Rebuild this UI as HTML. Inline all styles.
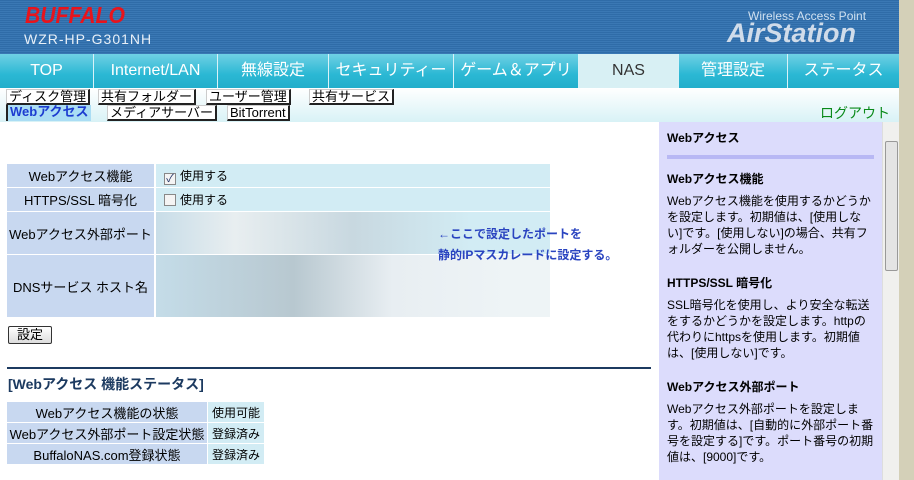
<!DOCTYPE html>
<html><head><meta charset="utf-8"><style>
*{margin:0;padding:0;box-sizing:border-box}
body{width:914px;height:480px;overflow:hidden;background:#fff;font-family:"Liberation Sans","Noto Sans CJK JP",sans-serif;font-size:13px;color:#000;position:relative}
.abs{position:absolute}
#hdr{left:0;top:0;width:899px;height:54px;background:repeating-linear-gradient(180deg,#2f6ca8 0 1px,#3a78b4 1px 2px)}
#nav{left:0;top:54px;width:899px;height:34px;background:linear-gradient(#6fd0e4,#2bb8d4 60%,#22aecb)}
.tab{position:absolute;top:0;height:34px;line-height:34px;text-align:center;color:#fff;font-size:16px;border-left:1px solid #d8f2f8}
#sub{left:0;top:88px;width:899px;height:34px;background:linear-gradient(#ffffff,#d8f2f6)}
.sb{position:absolute;height:16px;line-height:14px;font-size:13px;background:#fff;border:1px solid #ccc;border-right:2px solid #222;border-bottom:2px solid #222;padding:0 2px;white-space:nowrap}
#side{left:659px;top:122px;width:223px;height:358px;background:#dcdcfc;font-size:12px;line-height:16px;padding:8px;overflow:hidden}
#sb2{left:882px;top:122px;width:17px;height:358px;background:#f0f0ee;border-left:1px solid #ddd}
#beige{left:899px;top:0;width:15px;height:480px;background:#d4d0b8}
td{padding:0;white-space:nowrap}
.l{background:#c8d8f0;text-align:center;font-size:13px}
.v{background:#d2ecf4;font-size:12px}
.cb{display:inline-block;width:12px;height:12px;border:1px solid #888;background:#f4f4f4;vertical-align:-2px;margin:0 4px 0 8px;font-size:11px;line-height:10px;color:#236;text-align:center}
.h{font-weight:bold}
</style></head><body>
<div id="hdr" class="abs">
 <div class="abs" style="left:25px;top:2px;color:#e8141c;font-size:23px;font-weight:bold;font-style:italic;transform:scaleX(0.92);transform-origin:left">BUFFALO</div>
 <div class="abs" style="left:24px;top:31px;color:#e8f0f8;font-size:14px;letter-spacing:1px">WZR-HP-G301NH</div>
 <div class="abs" style="left:748px;top:9px;color:#cfe0f0;font-size:12px">Wireless Access Point</div>
 <div class="abs" style="left:727px;top:18px;color:#d0dcea;font-size:27px;font-weight:bold;font-style:italic">AirStation</div>
</div>
<div id="nav" class="abs">
 <div class="tab" style="left:0;width:93px;border:0">TOP</div>
 <div class="tab" style="left:93px;width:124px">Internet/LAN</div>
 <div class="tab" style="left:217px;width:111px">無線設定</div>
 <div class="tab" style="left:328px;width:125px">セキュリティー</div>
 <div class="tab" style="left:453px;width:125px">ゲーム＆アプリ</div>
 <div class="tab" style="left:578px;width:100px;background:#d8f0f4;color:#333">NAS</div>
 <div class="tab" style="left:678px;width:109px">管理設定</div>
 <div class="tab" style="left:787px;width:112px">ステータス</div>
</div>
<div id="sub" class="abs">
 <div class="sb" style="left:6px;top:1px">ディスク管理</div>
 <div class="sb" style="left:98px;top:1px">共有フォルダー</div>
 <div class="sb" style="left:206px;top:1px">ユーザー管理</div>
 <div class="sb" style="left:309px;top:1px">共有サービス</div>
 <div class="sb" style="left:6px;top:17px;background:#aaddf4;color:#1c3cd0;border:none;border-left:2px solid #222;font-weight:bold">Webアクセス</div>
 <div class="sb" style="left:107px;top:17px">メディアサーバー</div>
 <div class="sb" style="left:227px;top:17px">BitTorrent</div>
 <div class="abs" style="left:820px;top:15px;color:#0a8a1a;font-size:14px">ログアウト</div>
</div>
<table class="abs" style="left:7px;top:163px;border-collapse:separate;border-spacing:0 1px;width:543px">
 <tr style="height:23px"><td class="l" style="width:149px;border-right:2px solid #fff">Webアクセス機能</td><td class="v"><span class="cb">✓</span>使用する</td></tr>
 <tr style="height:23px"><td class="l" style="border-right:2px solid #fff">HTTPS/SSL 暗号化</td><td class="v"><span class="cb"></span>使用する</td></tr>
 <tr style="height:42px"><td class="l" style="border-right:2px solid #fff">Webアクセス外部ポート</td><td class="v" style="background:linear-gradient(90deg,#c8dde8,#e8eef0 20%,#c8d8e0 50%,#d2ecf4 80%)"></td></tr>
 <tr style="height:62px"><td class="l" style="border-right:2px solid #fff">DNSサービス ホスト名</td><td class="v" style="background:linear-gradient(90deg,#c4dce8,#b8c8d0 35%,#e8eef2 60%,#eef4f6 90%)"></td></tr>
</table>
<div class="abs" style="left:438px;top:224px;color:#2a44c0;font-size:12px;font-weight:bold;line-height:21px">←ここで設定したポートを<br>静的IPマスカレードに設定する。</div>
<div class="abs" style="left:8px;top:326px;width:44px;height:18px;border:1px solid #333;border-radius:2px;background:linear-gradient(#fff,#ddd);font-size:13px;text-align:center;line-height:16px">設定</div>
<div class="abs" style="left:7px;top:367px;width:644px;height:2px;background:#1c3a60"></div>
<div class="abs" style="left:8px;top:374px;color:#1c3a60;font-size:14px;font-weight:bold">[Webアクセス 機能ステータス]</div>
<table class="abs" style="left:7px;top:401px;border-collapse:separate;border-spacing:0 1px;font-size:12px">
 <tr style="height:20px"><td class="l" style="width:201px;border-right:1px solid #fff">Webアクセス機能の状態</td><td class="v" style="width:56px;padding-left:4px">使用可能</td></tr>
 <tr style="height:20px"><td class="l" style="border-right:1px solid #fff">Webアクセス外部ポート設定状態</td><td class="v" style="padding-left:4px">登録済み</td></tr>
 <tr style="height:20px"><td class="l" style="border-right:1px solid #fff">BuffaloNAS.com登録状態</td><td class="v" style="padding-left:4px">登録済み</td></tr>
</table>
<div id="side" class="abs">
 <div class="h">Webアクセス</div>
 <div style="height:4px;background:#b8b8f4;margin:9px 0 12px"></div>
 <div class="h">Webアクセス機能</div>
 <div style="margin-top:6px">Webアクセス機能を使用するかどうかを設定します。初期値は、[使用しない]です。[使用しない]の場合、共有フォルダーを公開しません。</div>
 <div class="h" style="margin-top:18px">HTTPS/SSL 暗号化</div>
 <div style="margin-top:6px">SSL暗号化を使用し、より安全な転送をするかどうかを設定します。httpの代わりにhttpsを使用します。初期値は、[使用しない]です。</div>
 <div class="h" style="margin-top:18px">Webアクセス外部ポート</div>
 <div style="margin-top:6px">Webアクセス外部ポートを設定します。初期値は、[自動的に外部ポート番号を設定する]です。ポート番号の初期値は、[9000]です。</div>
</div>
<div id="sb2" class="abs"><div class="abs" style="left:2px;top:19px;width:13px;height:130px;border:1px solid #999;background:#e4e4e4;border-radius:2px"></div></div>
<div id="beige" class="abs"></div>
</body></html>
